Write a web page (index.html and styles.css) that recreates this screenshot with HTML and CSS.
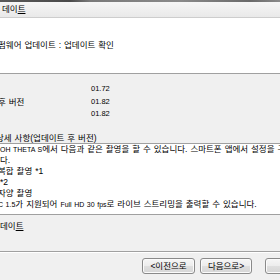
FILE: index.html
```html
<!DOCTYPE html>
<html lang="ko">
<head>
<meta charset="utf-8">
<link rel="stylesheet" href="styles.css">
</head>
<body>
<div class="window">
  <div class="titlestrip"></div>
  <div class="menubar"><span class="menu-item">데이<u>트</u></span></div>
  <div class="header"><p class="header-title">펌웨어 업데이트 : 업데이트 확인</p></div>
  <div class="content">
    <div class="versions">
      <span class="label"></span><span class="value">01.72</span>
      <span class="label cut">후 버전</span><span class="value">01.82</span>
      <span class="label"></span><span class="value">01.82</span>
    </div>
    <div class="detail-title">상세 사항(업데이트 후 버전)</div>
    <div class="textbox">
      <div class="line"><span class="lat">OH THETA S</span>에서 다음과 같은 촬영을 할 수 있습니다. 스마트폰 앱에서 설정을 구성할 수 있습니다.</div>
      <div class="line">다.</div>
      <div class="line cut">복합 촬영 *1</div>
      <div class="line">*2</div>
      <div class="line cut">자양 촬영</div>
      <div class="line cut"><span class="lat">C 1.5</span>가 지원되어 <span class="lat">Full HD 30 fps</span>로 라이브 스트리밍을 출력할 수 있습니다.</div>
    </div>
    <div class="check-label">데이<u>트</u></div>
  </div>
  <div class="footer">
    <button class="btn btn-prev">&lt;이전으로</button>
    <button class="btn btn-next">다음으로&gt;</button>
    <button class="btn btn-cancel">취소</button>
  </div>
</div>
</body>
</html>
```
FILE: styles.css
```css
html, body {
  margin: 0;
  padding: 0;
  background: #f0f0f0;
}
.window {
  width: 280px;
  height: 280px;
  overflow: hidden;
  font-family: "Liberation Sans", "Noto Sans CJK KR", sans-serif;
  font-size: 8.5px;
  word-spacing: 0.6px;
  color: #000000;
  background: #f0f0f0;
}
.lat {
  font-size: 7px;
}
.titlestrip {
  height: 2px;
  background: linear-gradient(90deg, #5a5a5a 0, #4a4a4a 70px, #7a7a7a 90px, #8a8a8a 180px, #6a6a6a 250px, #8a8a8a 280px);
}
.menubar {
  height: 15px;
  line-height: 15px;
  background: linear-gradient(#f6f6f6, #e9e9e9);
  border-bottom: 1px solid #cdcdcd;
  padding-left: 2px;
  white-space: nowrap;
}
.menu-item u, .check-label u {
  text-decoration: underline;
}
.header {
  background: #ffffff;
  border-bottom: 1px solid #a0a0a0;
  box-sizing: border-box;
  height: 56px;
}
.header-title {
  margin: 0 0 0 -2px;
  padding-top: 22px;
  line-height: 10px;
  white-space: nowrap;
}
.content {
  padding-top: 9px;
  height: 178px;
  box-sizing: border-box;
  border-bottom: 1px solid #a0a0a0;
}
.versions {
  display: grid;
  grid-template-columns: 91px auto;
  line-height: 12.5px;
}
.value {
  font-size: 7.5px;
}
.label {
  white-space: nowrap;
}
.cut {
  margin-left: -2px;
}
.detail-title {
  margin: 12.5px 0 0 -4px;
  line-height: 10px;
  white-space: nowrap;
}
.textbox {
  background: #ffffff;
  border-top: 1px solid #a0a0a0;
  border-bottom: 1px solid #a0a0a0;
  padding-bottom: 4px;
  overflow: hidden;
}
.line {
  line-height: 11px;
  white-space: nowrap;
}
.check-label {
  margin-top: 6px;
  line-height: 10px;
}
.footer {
  display: flex;
  padding: 5px 0 0 142px;
  white-space: nowrap;
  border-top: 1px solid #ffffff;
}
.btn {
  flex: none;
  height: 16px;
  padding: 0;
  margin: 0;
  font: inherit;
  color: #000000;
  border: 1px solid #8a8a8a;
  border-radius: 3px;
  background: linear-gradient(#f6f6f6 0, #ececec 50%, #dfdfdf 50%, #d6d6d6 100%);
  box-shadow: inset 0 0 0 1px #fbfbfb;
  line-height: 14px;
}
.btn-prev {
  width: 53px;
}
.btn-next {
  width: 52px;
  margin-left: 5px;
}
.btn-cancel {
  width: 53px;
  margin-left: 13px;
  color: transparent;
}
```
